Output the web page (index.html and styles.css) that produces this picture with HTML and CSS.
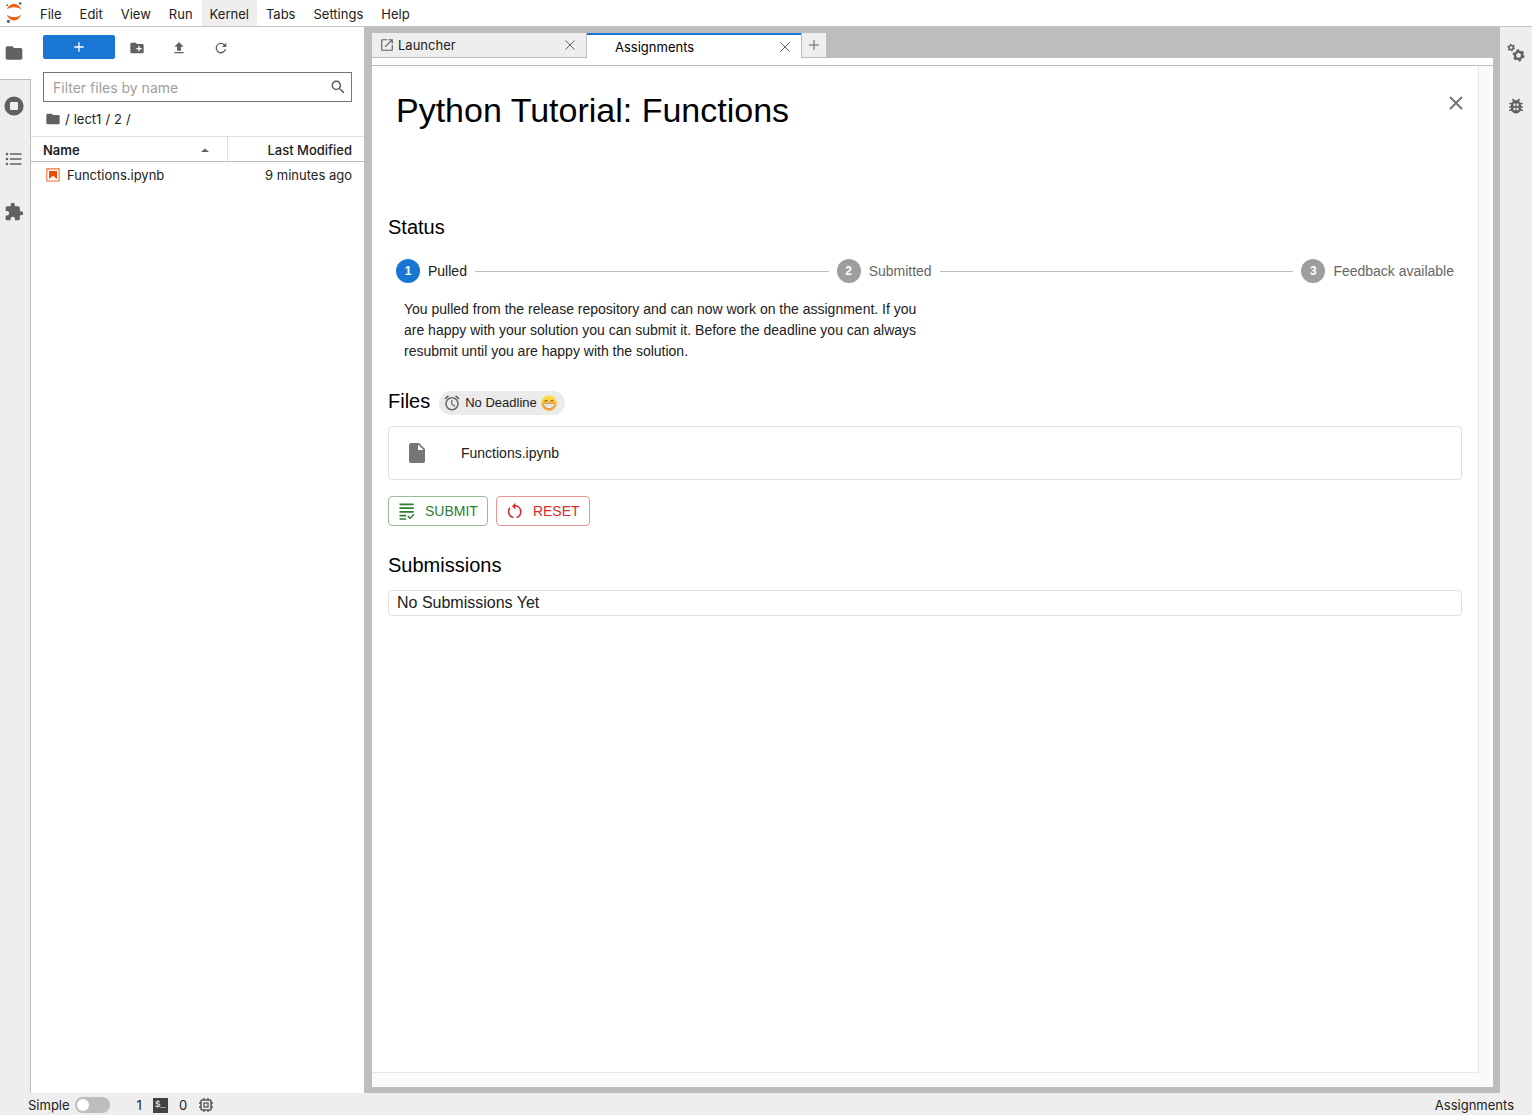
FILE: index.html
```html
<!DOCTYPE html>
<html lang="en">
<head>
<meta charset="utf-8">
<title>Assignments - JupyterLab</title>
<link rel="stylesheet" href="styles.css">
</head>
<body>
<div class="app">
  <header class="menubar">
    <svg class="logo" width="18" height="24" viewBox="0 0 18 24" aria-hidden="true">
      <path d="M1.800 9.500C3.200 6 6 3.800 9 3.800S14.800 6 16.200 9.500C14.300 7.900 11.700 7.200 9 7.200S3.700 7.900 1.800 9.500zM1.800 14.800C3.200 18.300 6 20.500 9 20.500S14.800 18.300 16.200 14.800C14.300 16.400 11.700 17.100 9 17.100S3.700 16.400 1.800 14.800z" fill="#f1620f"/>
      <circle cx="15.200" cy="3.500" r="1.300" fill="#616161"/><circle cx="2.200" cy="5.200" r="0.900" fill="#616161"/><circle cx="3.400" cy="21.300" r="1.600" fill="#616161"/>
    </svg>
    <nav class="menus" aria-label="Main menu">
      <button>File</button><button>Edit</button><button>View</button><button>Run</button><button class="hovered">Kernel</button><button>Tabs</button><button>Settings</button><button>Help</button>
    </nav>
  </header>

  <div class="workspace">
    <nav class="rail rail-left" aria-label="Left sidebar">
      <button class="rail-tab current" aria-label="File Browser"><svg width="20" height="20" viewBox="0 0 24 24"><path d="M10 4H4c-1.100 0-1.990.900-1.990 2L2 18c0 1.100.900 2 2 2h16c1.100 0 2-.900 2-2V8c0-1.100-.900-2-2-2h-8l-2-2z"/></svg></button>
      <button class="rail-tab" aria-label="Running Terminals and Kernels"><svg width="20" height="20" viewBox="0 0 20 20"><path fill-rule="evenodd" d="M10 .400a9.600 9.600 0 1 0 0 19.200A9.600 9.600 0 0 0 10 .400zM7 6h6a1 1 0 0 1 1 1v6a1 1 0 0 1-1 1H7a1 1 0 0 1-1-1V7a1 1 0 0 1 1-1z"/></svg></button>
      <button class="rail-tab" aria-label="Table of Contents"><svg width="20" height="20" viewBox="0 0 24 24"><path d="M7 5h14v2H7zM7 11h14v2H7zM7 17h14v2H7z"/><circle cx="3.500" cy="6" r="1.500"/><circle cx="3.500" cy="12" r="1.500"/><circle cx="3.500" cy="18" r="1.500"/></svg></button>
      <button class="rail-tab" aria-label="Extension Manager"><svg width="20" height="20" viewBox="0 0 24 24"><path d="M20.500 11H19V7c0-1.100-.900-2-2-2h-4V3.500a2.500 2.500 0 0 0-5 0V5H4c-1.100 0-1.990.900-1.990 2v3.800H3.500a2.700 2.700 0 0 1 0 5.400H2V20c0 1.100.900 2 2 2h3.800v-1.500a2.700 2.700 0 0 1 5.400 0V22H17c1.100 0 2-.900 2-2v-4h1.500a2.500 2.500 0 0 0 0-5z"/></svg></button>
      <div class="rail-fill"></div>
    </nav>

    <aside class="browser">
      <div class="browser-tools">
        <button class="new-button" aria-label="New Launcher"><svg width="16" height="16" viewBox="0 0 24 24"><path d="M19 13h-6v6h-2v-6H5v-2h6V5h2v6h6v2z"/></svg></button>
        <button class="tool" aria-label="New Folder"><svg width="16" height="16" viewBox="0 0 24 24"><path d="M20 6h-8l-2-2H4c-1.110 0-1.990.890-1.990 2L2 18c0 1.110.890 2 2 2h16c1.110 0 2-.890 2-2V8c0-1.110-.890-2-2-2zm-1 8h-3v3h-2v-3h-3v-2h3V9h2v3h3v2z"/></svg></button>
        <button class="tool" aria-label="Upload Files"><svg width="16" height="16" viewBox="0 0 24 24"><path d="M9 16h6v-6h4l-7-7-7 7h4zm-4 2h14v2H5z"/></svg></button>
        <button class="tool" aria-label="Refresh"><svg width="16" height="16" viewBox="0 0 18 18"><path d="M9 13.500a4.500 4.500 0 1 1 0-9c1.240 0 2.360.520 3.170 1.330L10 8h5V3l-1.760 1.760A6 6 0 1 0 14.840 10.500h-1.550A4.500 4.500 0 0 1 9 13.500z"/></svg></button>
      </div>
      <label class="filter">
        <input type="text" placeholder="Filter files by name" aria-label="Filter files by name">
        <svg width="16" height="16" viewBox="0 0 18 18"><path d="M12.100 10.900h-.700l-.200-.200c.800-.900 1.300-2.200 1.300-3.500 0-3-2.400-5.400-5.400-5.400S1.800 4.200 1.800 7.100s2.400 5.400 5.400 5.400c1.300 0 2.500-.500 3.500-1.300l.200.200v.700l4.100 4.100 1.200-1.200-4.100-4.100zm-5 0c-2.100 0-3.700-1.700-3.700-3.700s1.700-3.700 3.700-3.700 3.700 1.700 3.700 3.700-1.600 3.700-3.700 3.700z"/></svg>
      </label>
      <nav class="crumbs" aria-label="Breadcrumbs">
        <svg width="16" height="16" viewBox="0 0 24 24"><path d="M10 4H4c-1.100 0-1.990.900-1.990 2L2 18c0 1.100.900 2 2 2h16c1.100 0 2-.900 2-2V8c0-1.100-.900-2-2-2h-8l-2-2z"/></svg>
        <span>/</span><a href="#lect1">lect1</a><span>/</span><a href="#2">2</a><span>/</span>
      </nav>
      <table class="listing">
        <thead><tr><th class="name"><div class="sort">Name<svg width="8" height="4" viewBox="0 0 10 5"><path d="M0 5l5-4.500L10 5z"/></svg></div></th><th class="modified">Last Modified</th></tr></thead>
        <tbody><tr><td class="name"><div class="file"><svg width="16" height="16" viewBox="0 0 22 22"><path fill="#f0712f" d="M18.700 3.300v15.400H3.300V3.300h15.400m1.500-1.500H1.800v18.300h18.300l.100-18.300z"/><path fill="#e65100" d="M16.500 16.500l-5.400-4.300-5.600 4.300v-11h11z"/></svg>Functions.ipynb</div></td><td class="modified">9 minutes ago</td></tr></tbody>
      </table>
    </aside>

    <main class="dock">
      <div class="tabs">
        <div class="tab">
          <svg class="tab-icon" width="14" height="14" viewBox="0 0 24 24"><path d="M20 20H4V4h8V2H4a2 2 0 0 0-2 2v16a2 2 0 0 0 2 2h16a2 2 0 0 0 2-2v-8h-2zM14 2v2h4.600L8 14.600 9.400 16 20 5.400V10h2V2z"/></svg>
          <span>Launcher</span>
          <button aria-label="Close Launcher"><svg width="12" height="12" viewBox="0 0 12 12"><path d="M1.500 1.500l9 9m0-9l-9 9" class="line"/></svg></button>
        </div>
        <div class="tab active">
          <span>Assignments</span>
          <button aria-label="Close Assignments"><svg width="12" height="12" viewBox="0 0 12 12"><path d="M1.500 1.500l9 9m0-9l-9 9" class="line"/></svg></button>
        </div>
        <button class="add-tab" aria-label="New tab"><svg width="12" height="12" viewBox="0 0 12 12"><path d="M6 1v10M1 6h10" class="line"/></svg></button>
      </div>
      <div class="panel">
        <div class="panel-bar"></div>
        <div class="panel-body">
          <article class="paper">
            <div class="title-row">
              <h1>Python Tutorial: Functions</h1>
              <button class="close" aria-label="Close assignment"><svg width="16" height="16" viewBox="0 0 16 16"><path d="M2 2l12 12m0-12L2 14" class="line"/></svg></button>
            </div>
            <section class="status">
              <h2>Status</h2>
              <ol class="steps">
                <li class="done"><span class="dot">1</span>Pulled</li>
                <li><span class="dot">2</span>Submitted</li>
                <li><span class="dot">3</span>Feedback available</li>
              </ol>
              <p>You pulled from the release repository and can now work on the assignment. If you are happy with your solution you can submit it. Before the deadline you can always resubmit until you are happy with the solution.</p>
            </section>
            <section class="files">
              <div class="files-head">
                <h2>Files</h2>
                <span class="chip">
                  <svg width="18" height="18" viewBox="0 0 24 24"><path d="M12.500 8H11v6l4.750 2.850.750-1.230-4-2.370V8zm4.837-6.190l4.607 3.845-1.280 1.535-4.610-3.843 1.283-1.537zm-10.674 0l1.282 1.536L3.337 7.190l-1.280-1.536L6.663 1.810zM12 4a9 9 0 1 0 .001 18.001A9 9 0 0 0 12 4zm0 16c-3.860 0-7-3.140-7-7s3.140-7 7-7 7 3.140 7 7-3.140 7-7 7z"/></svg>
                  No Deadline
                  <svg width="16" height="16" viewBox="0 0 16 16"><defs><linearGradient id="face" x1="0" y1="0" x2="0" y2="1"><stop offset="0" stop-color="#ffe352"/><stop offset="1" stop-color="#f5a11f"/></linearGradient></defs><circle cx="8" cy="8" r="7.800" fill="url(#face)"/><path d="M3.500 6.500Q5 4 6.500 6.500M9.500 6.500Q11 4 12.500 6.500" fill="none" stroke="#69401b" stroke-width="1"/><path d="M2.600 8.500h10.800c0 3-2.300 5-5.400 5s-5.400-2-5.400-5z" fill="#fff" stroke="#a36b2b" stroke-width=".6"/><path d="M3 10.700h10M5.500 8.500v4.300M8 8.500v5M10.500 8.500v4.300" fill="none" stroke="#b9b1a5" stroke-width=".4"/></svg>
                </span>
              </div>
              <a class="file-card" href="#functions">
                <svg width="24" height="24" viewBox="0 0 24 24"><path d="M6 2c-1.100 0-1.990.900-1.990 2L4 20c0 1.100.890 2 1.990 2H18c1.100 0 2-.900 2-2V8l-6-6H6zm7 7V3.500L18.500 9H13z"/></svg>
                Functions.ipynb
              </a>
              <div class="actions">
                <button class="submit"><svg width="18" height="18" viewBox="0 0 24 24"><path d="M2 2h19v2.400H2zM2 7h19v2.400H2zM2 12h19v2.400H2zM2 17h9v2.400H2zM2 21.500h9v2.200H2zM20.600 15.600L22 17l-6 6-3.500-3.500 1.400-1.400 2.100 2.100z"/></svg>Submit</button>
                <button class="reset"><svg width="18" height="18" viewBox="0 0 24 24"><path d="M12.500 4V1L8 5.500l4.500 4.500V6.100a7 7 0 0 1 1.500 13.500v2.100A9 9 0 0 0 12.500 4zM6 8.500L4.600 7A9 9 0 0 0 10 21.700v-2.100A7 7 0 0 1 6 8.500z"/></svg>Reset</button>
              </div>
            </section>
            <section class="submissions">
              <h2>Submissions</h2>
              <div class="empty">No Submissions Yet</div>
            </section>
          </article>
        </div>
      </div>
    </main>

    <nav class="rail rail-right" aria-label="Right sidebar">
      <button class="rail-tab" aria-label="Property Inspector"><svg width="20" height="20" viewBox="0 0 20 20"><g fill="none" stroke="#616161"><circle cx="5.200" cy="4.600" r="2.100" stroke-width="1.500"/><circle cx="5.200" cy="4.600" r="3.200" stroke-width="1.400" stroke-dasharray="1.500 1.850"/><circle cx="12.600" cy="12.400" r="3.600" stroke-width="2.500"/><circle cx="12.600" cy="12.400" r="5.200" stroke-width="1.700" stroke-dasharray="2.600 2.845"/></g></svg></button>
      <button class="rail-tab" aria-label="Debugger"><svg width="20" height="20" viewBox="0 0 24 24"><path fill-rule="evenodd" d="M20 8h-2.810a5.900 5.900 0 0 0-1.820-1.960L17 4.410 15.590 3l-2.170 2.170a6 6 0 0 0-2.830 0L8.410 3 7 4.410l1.620 1.630C7.880 6.550 7.260 7.220 6.810 8H4v2h2.090c-.050.330-.090.660-.090 1v1H4v2h2v1c0 .340.040.670.090 1H4v2h2.810a6 6 0 0 0 10.380 0H20v-2h-2.090c.050-.330.090-.660.090-1v-1h2v-2h-2v-1c0-.340-.040-.670-.090-1H20V8zM9 9h2.300v3H9zM12.700 9H15v3h-2.300zM9 14h2.300v3H9zM12.700 14H15v3h-2.300z"/></svg></button>
    </nav>
  </div>

  <footer class="statusbar">
    <label class="simple">Simple<input type="checkbox" role="switch"></label>
    <div class="counts">
      <span>1</span>
      <span class="terminal">$_</span>
      <span>0</span>
      <svg width="16" height="16" viewBox="0 0 16 16"><g fill="none" stroke="#555"><rect x="3" y="3" width="10" height="10" rx="1" stroke-width="1.500"/><rect x="6" y="6" width="4" height="4" stroke-width="1.300"/><path d="M6 1v2M10 1v2M6 13v2M10 13v2M1 6h2M1 10h2M13 6h2M13 10h2" stroke-width="1.400"/></g></svg>
    </div>
    <span class="context">Assignments</span>
  </footer>
</div>
</body>
</html>
```
FILE: styles.css
```css
* { box-sizing: border-box; }
body { margin: 0; font: 13px/18px Inter, "Liberation Sans", sans-serif; color: #212121; background: #fff; }
button { margin: 0; padding: 0; border: 0; background: none; color: inherit; font: inherit; }
a { color: inherit; text-decoration: none; }
svg { display: block; flex: none; fill: #616161; }
.line { fill: none; stroke: #616161; stroke-width: 1; }
h1, h2, p, ol { margin: 0; padding: 0; font-weight: 400; }

.app { display: flex; flex-direction: column; min-height: 100vh; }
.menubar { display: flex; height: 27px; border-bottom: 1px solid #c4c4c4; }
.logo { margin-left: 5px; }
.menus { display: flex; margin-left: 8px; }
.menus button { padding: 1px 9px 0; }
.menus .hovered { padding: 1px 8px 0; background: #eee; }

.workspace { flex: 1; display: flex; }
.rail { display: flex; flex-direction: column; background: #eee; }
.rail-left { width: 31px; }
.rail-right { width: 32px; }
.rail-tab { display: flex; align-items: center; height: 53px; padding: 0 0 1px 4px; }
.rail-left .rail-tab { border-right: 1px solid #bdbdbd; }
.rail-right .rail-tab { padding-left: 6px; }
.rail-left .current { padding-bottom: 0; background: #fff; border-right: 0; border-bottom: 1px solid #bdbdbd; }
.rail-fill { flex: 1; border-right: 1px solid #bdbdbd; }

.browser { width: 333px; }
.browser-tools { display: flex; align-items: center; padding: 8px 12px 0; }
.new-button { display: flex; align-items: center; justify-content: center; width: 72px; height: 24px; margin-right: 1px; background: #1976d2; border-radius: 2px; }
.new-button svg { fill: #fff; }
.tool { display: flex; justify-content: center; width: 42px; padding-top: 2px; }
.filter { display: flex; align-items: center; height: 30px; margin: 13px 12px 0; padding: 0 5px 0 9px; border: 1px solid #757575; }
.filter input { flex: 1; min-width: 0; padding: 2px 0 0; border: 0; outline: 0; background: none; font: inherit; font-size: 14px; }
.filter input::placeholder { color: #9e9e9e; }
.crumbs { display: flex; align-items: center; gap: 4px; height: 34px; padding-left: 14px; }
.listing { width: 100%; border-collapse: collapse; }
.listing th { height: 25px; padding: 1px 12px 0; border-top: 1px solid #e0e0e0; border-bottom: 1px solid #bdbdbd; font-weight: 500; }
.listing td { height: 25px; padding: 1px 12px 0; }
.listing .name { width: 196px; text-align: left; }
.listing .modified { text-align: right; }
.listing th.modified { border-left: 1px solid #e0e0e0; }
.sort { display: flex; align-items: center; justify-content: space-between; padding-right: 6px; font-weight: 600; }
.file { display: flex; align-items: center; gap: 6px; padding-left: 2px; }

.dock { flex: 1; display: flex; flex-direction: column; padding: 6px 7px 6px 8px; background: #bdbdbd; }
.tabs { display: flex; height: 25px; }
.tab { display: flex; align-items: center; width: 215px; padding: 0 10px 0 8px; background: #eee; border: 1px solid #bdbdbd; border-width: 0 1px 1px 0; }
.tab span { flex: 1; padding-left: 4px; }
.tab.active { width: 214px; background: #fff; border-width: 2px 0 0; border-color: #1976d2; color: #000; }
.tab.active span { padding-left: 20px; }
.add-tab { display: flex; align-items: center; justify-content: center; width: 25px; background: #eee; border: 1px solid #bdbdbd; border-width: 0 0 1px 1px; }
.panel { flex: 1; display: flex; flex-direction: column; background: #fafafa; }
.panel-bar { height: 8px; background: #fff; border-bottom: 1px solid #bdbdbd; }
.panel-body { flex: 1; display: flex; padding: 0 14px 14px 0; }

.paper { flex: 1; padding: 0 16px; background: #fff; border: 1px solid #e8e8e8; border-width: 0 1px 1px 0; font-family: "Liberation Sans", Arial, sans-serif; }
.title-row { display: flex; justify-content: space-between; align-items: flex-start; padding: 23px 0 0 8px; }
h1 { font-size: 34px; line-height: 42px; color: #000; }
.close { padding: 6px 0 0; margin-right: -2px; }
.close .line { stroke-width: 2; stroke: #757575; }
h2 { font-size: 20px; line-height: 32px; color: #000; }
.status { padding-top: 80px; }
.steps { display: flex; align-items: center; margin-top: 16px; padding: 0 8px; list-style: none; font-size: 14px; line-height: 24px; color: #666; }
.steps li { display: flex; align-items: center; gap: 8px; }
.steps li:not(:last-child) { flex: 1 0 auto; }
.steps li:not(:last-child)::after { content: ""; flex: 1; height: 1px; margin-right: 8px; background: #bdbdbd; }
.steps .done { color: #212121; }
.dot { width: 24px; height: 24px; border-radius: 50%; background: #9e9e9e; color: #fff; font-size: 12px; font-weight: 700; text-align: center; }
.done .dot { background: #1976d2; }
.status p { max-width: 548px; padding: 16px 0 0 16px; font-size: 14px; line-height: 21px; }
.files { padding-top: 23px; }
.files-head { display: flex; align-items: center; gap: 9px; }
.chip { display: flex; align-items: center; gap: 4px; height: 24px; margin-top: 3px; padding: 0 8px 0 4px; border-radius: 12px; background: #ebebeb; font-size: 13px; }
.file-card { display: flex; align-items: center; gap: 32px; height: 54px; margin-top: 9px; padding-left: 16px; border: 1px solid #e0e0e0; border-radius: 4px; font-size: 14px; }
.file-card svg { fill: #757575; }
.actions { display: flex; gap: 8px; margin-top: 16px; }
.actions button { display: flex; align-items: center; gap: 9px; height: 30px; padding: 0 9px; border: 1px solid; border-radius: 4px; font-size: 14px; text-transform: uppercase; }
.actions svg { fill: currentColor; }
.actions .submit { color: #2e7d32; border-color: #96be98; }
.actions .reset { color: #d32f2f; border-color: #e99797; }
.submissions { padding-top: 23px; }
.empty { height: 26px; margin-top: 9px; padding-left: 8px; border: 1px solid #e0e0e0; border-radius: 4px; font-size: 16px; line-height: 24px; }

.statusbar { display: flex; align-items: center; height: 22px; padding: 2px 18px 0 28px; background: #eee; }
.simple { display: flex; align-items: center; gap: 5px; }
.simple input { appearance: none; width: 35px; height: 16px; margin: 0; padding: 2px; border-radius: 8px; background: #bdbdbd; }
.simple input::before { content: ""; display: block; width: 12px; height: 12px; border-radius: 50%; background: #fff; }
.counts { display: flex; align-items: center; gap: 11px; margin-left: 27px; }
.terminal { width: 15px; height: 15px; background: #424242; color: #fff; font: 9px/15px "Liberation Mono", monospace; text-align: center; }
.context { margin-left: auto; }
```
